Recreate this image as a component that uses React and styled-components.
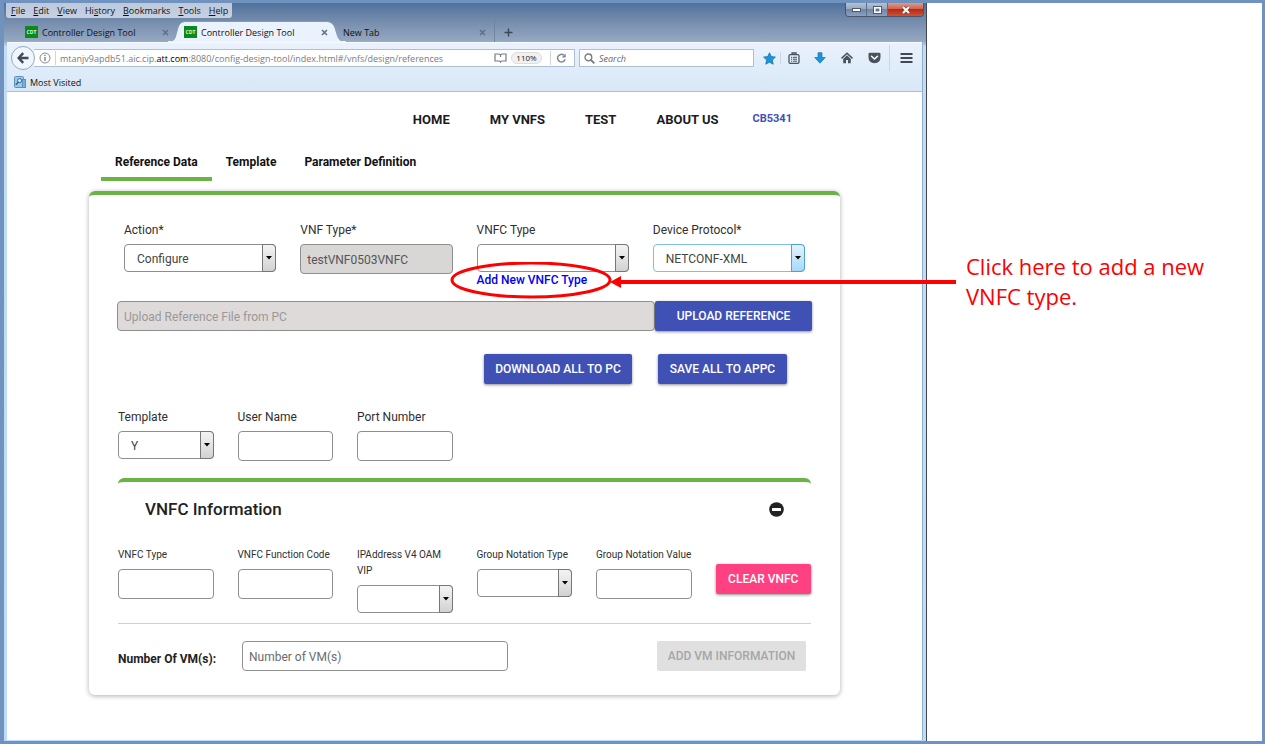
import React from 'react';
import styled, { createGlobalStyle } from 'styled-components';

const GlobalStyle = createGlobalStyle`
  *, *::before, *::after { box-sizing: border-box; }
  body { margin: 0; background: #fff; font-family: Roboto, "Liberation Sans", sans-serif; color: #2b2b2b; }
  button, input, select { font: inherit; margin: 0; }
  a { text-decoration: none; }
`;

const Slide = styled.main`
  display: grid;
  grid-template-columns: minmax(0, 1fr) 335px;
  min-height: 100vh;
  border: 3px solid #7092be;
  border-left-width: 4px;
  background: #fff;
`;

/* ---------- Browser window ---------- */

const BrowserWindow = styled.section`
  display: flex;
  flex-direction: column;
  border-right: 1px solid #40464f;
  background: linear-gradient(#4f719d, #7189aa 16px, #95a8c1 38px, #c3dcf4 44px, #bddcf8);
`;

const ChromeFont = styled.div`
  font-family: "Open Sans", "Noto Sans", sans-serif;
  font-size: 9px;
  color: #111;
`;

const TitleRow = styled(ChromeFont)`
  display: flex;
  justify-content: space-between;
  align-items: flex-start;
  padding: 0 2px;
`;

const MenuBar = styled.nav`
  display: flex;
  gap: 8px;
  height: 15px;
  padding: 0 4px 0 5px;
  border-radius: 0 0 3px 3px;
  background: rgba(235, 240, 248, 0.7);
`;

const MenuItem = styled.button`
  padding: 0;
  border: 0;
  background: none;
  color: #111;
  line-height: 14px;
`;

const WindowButtons = styled.div`
  display: flex;
  height: 14px;
  border: 1px solid #46566d;
  border-top: 0;
  border-radius: 0 0 4px 4px;
  overflow: hidden;
`;

const WindowButton = styled.button`
  display: grid;
  place-items: center;
  width: ${(p) => (p.$close ? 35 : 21)}px;
  padding: 0;
  border: 0;
  border-right: ${(p) => (p.$close ? 0 : 1)}px solid #5d6f88;
  background: ${(p) =>
    p.$close
      ? 'linear-gradient(#dd9a8c, #cf6350 45%, #b92a13 50%, #cf5334)'
      : 'linear-gradient(#b4c1d3, #97a8c0 45%, #6f86a6 50%, #8ba1bf)'};
`;

const TabStrip = styled(ChromeFont)`
  display: flex;
  align-items: stretch;
  height: 24px;
  padding-left: 14px;
`;

const BrowserTab = styled.div`
  position: relative;
  display: flex;
  align-items: center;
  gap: 4px;
  width: 159px;
  padding: 4px 8px 0 7px;
  border-right: ${(p) => (p.$last ? 1 : 0)}px solid #73849b;
`;

const ActiveShape = styled.svg`
  position: absolute;
  left: -10px;
  top: 3px;
`;

const TabTitle = styled.span`
  position: relative;
  flex: 1;
  white-space: nowrap;
`;

const Favicon = styled.span`
  position: relative;
  width: 13px;
  height: 12px;
  background: #0a8a17;
  color: #d9f5d9;
  font-size: 5px;
  font-weight: 700;
  line-height: 12px;
  text-align: center;
`;

const IconButton = styled.button`
  position: relative;
  display: grid;
  place-items: center;
  padding: 0;
  border: 0;
  background: none;
`;

const NewTabButton = styled(IconButton)`
  width: 26px;
  padding-top: 4px;
`;

const WindowBody = styled.div`
  flex: 1;
  display: flex;
  flex-direction: column;
  margin: 0 3px 1px;
  border-right: 1px solid #8fb0d0;
`;

const Toolbar = styled(ChromeFont)`
  display: flex;
  align-items: center;
  height: 31px;
  padding-left: 4px;
  border-top: 1px solid #f6faff;
  background: linear-gradient(#eaf2fd, #deebf9);
`;

const BackButton = styled(IconButton)`
  flex: none;
  width: 24px;
  height: 24px;
  margin-right: -1px;
  border: 1px solid #93a9c4;
  border-radius: 50%;
  background: #f0f6fd;
`;

const BarField = styled.div`
  display: flex;
  align-items: center;
  gap: 4px;
  height: 18px;
  border: 1px solid #aebfd3;
  background: #fff;
`;

const AddressBar = styled(BarField)`
  flex: 1;
  min-width: 0;
  padding: 0 6px 0 5px;
  border-left: 0;
`;

const Address = styled.div`
  flex: 1;
  min-width: 0;
  overflow: hidden;
  white-space: nowrap;
  color: #7b7b7b;
  outline: 0;
  b { font-weight: 400; color: #000; }
`;

const ZoomPill = styled.button`
  height: 12px;
  width: 31px;
  margin-right: 4px;
  padding: 0;
  border: 1px solid #ddd;
  border-radius: 6px;
  background: #f1f1f1;
  font-size: 8px;
  line-height: 10px;
  color: #222;
`;

const Rule = styled.span`
  width: 1px;
  height: ${(p) => p.$h || 14}px;
  background: #ccd5e0;
`;

const SearchBar = styled(BarField)`
  width: 175px;
  margin-left: 4px;
  padding: 0 4px;
`;

const SearchInput = styled.input`
  min-width: 0;
  flex: 1;
  padding: 0;
  border: 0;
  outline: 0;
  background: none;
  font-style: italic;
  &::placeholder { color: #666; opacity: 1; }
`;

const ToolIcons = styled.div`
  display: grid;
  grid-template-columns: 22px 1px 25px 27px 27px 29px 1px 32px;
  align-items: center;
  margin-left: 4px;
`;

const BookmarkBar = styled(ChromeFont)`
  display: flex;
  align-items: center;
  height: 19px;
  padding-left: 7px;
  border-bottom: 1px solid #aabfd6;
  background: linear-gradient(#deebf9, #d9e7f6);
`;

const BookmarkLink = styled.a`
  display: flex;
  align-items: center;
  gap: 4px;
  color: #111;
`;

/* ---------- Web page ---------- */

const Page = styled.div`
  flex: 1;
  padding: 18px 82px 45px;
  background: #fff;
`;

const MainNav = styled.nav`
  display: flex;
  justify-content: flex-end;
  gap: 40px;
  padding-right: 48px;
  line-height: 20px;
`;

const NavLink = styled.a`
  color: #1c1c1c;
  font-size: 13px;
  font-weight: 700;
`;

const UserLink = styled.a`
  margin-left: -6px;
  color: #3f51b5;
  font-size: 11px;
  font-weight: 700;
  line-height: 17px;
`;

const SectionTabs = styled.div`
  display: flex;
  margin-top: 22px;
  padding-left: 12px;
`;

const SectionTab = styled.button`
  padding: 0 14px 5px;
  border: 0;
  border-bottom: 4px solid ${(p) => (p.$active ? '#69b445' : 'transparent')};
  background: none;
  color: #111;
  font-size: 12px;
  font-weight: 700;
  line-height: 20px;
`;

const Card = styled.form`
  margin-top: 10px;
  padding: 27px 29px 24px;
  border-top: 4px solid #69b445;
  border-radius: 6px;
  box-shadow: 0 1px 5px rgba(0, 0, 0, 0.32);
`;

const TopGrid = styled.div`
  display: grid;
  grid-template-columns: repeat(4, minmax(0, 1fr));
  gap: 24px;
  padding: 0 6px;
`;

const SixGrid = styled.div`
  display: grid;
  grid-template-columns: repeat(6, minmax(0, 1fr));
  align-items: start;
  column-gap: 24px;
`;

const Field = styled.div`
  position: relative;
  display: flex;
  flex-direction: column;
`;

const Label = styled.label`
  margin-bottom: 6px;
  color: #2f2f2f;
  font-size: ${(p) => (p.$small ? 10 : 12)}px;
  line-height: 16px;
`;

const TextInput = styled.input`
  width: 100%;
  height: 30px;
  padding: 1px 6px 0;
  border: 1px solid #8e8e8e;
  border-radius: 4px;
  background: #fff;
  color: #555;
  font-size: 12px;
  &::placeholder { color: #6c6c6c; opacity: 1; }
  &:disabled { background: #d9d6d6; }
`;

const UploadInput = styled(TextInput)`
  flex: 1;
  min-width: 0;
  &:disabled { background: #dfdada; }
  &::placeholder { color: #9a9898; }
`;

const SelectWrap = styled.div`
  position: relative;
  display: flex;
`;

const SelectBox = styled.select`
  appearance: none;
  width: 100%;
  height: 28px;
  padding: 2px 16px 0 12px;
  border: 1px solid ${(p) => (p.$focused ? '#7fbcf0' : '#8e8e8e')};
  border-radius: 4px;
  background: #fff;
  color: #444;
  font-size: 12px;
`;

const SelectArrow = styled.span`
  position: absolute;
  top: 0;
  right: 0;
  bottom: 0;
  display: grid;
  place-items: center;
  width: 14px;
  border: 1px solid ${(p) => (p.$focused ? '#4f9fd8' : '#777')};
  border-radius: 0 4px 4px 0;
  background: ${(p) =>
    p.$focused ? 'linear-gradient(#e4f3fd, #a6d9f7)' : 'linear-gradient(#f4f4f4, #d2d2d2)'};
  pointer-events: none;
`;

const AddLink = styled.a`
  color: #0000f5;
  font-size: 12px;
  font-weight: 500;
  line-height: 16px;
`;

const Callout = styled.svg`
  position: absolute;
  left: -28px;
  bottom: -12px;
  z-index: 2;
  pointer-events: none;
`;

const UploadRow = styled.div`
  display: flex;
  margin: 13px -1px 0;
`;

const ButtonRow = styled.div`
  display: flex;
  justify-content: flex-end;
  gap: 26px;
  margin: 23px 24px 25px 0;
`;

const ActionButton = styled.button`
  height: 30px;
  width: ${(p) => (p.$width ? `${p.$width}px` : 'auto')};
  padding: 0;
  border: 0;
  border-radius: 2px;
  background: ${(p) => (p.$pink ? '#ff4081' : '#3f51b5')};
  color: #fff;
  font-size: 12px;
  font-weight: 500;
  white-space: nowrap;
  box-shadow: 0 1px 3px rgba(0, 0, 0, 0.45);
  &:disabled { background: #e0e0e0; color: #a6a6a6; box-shadow: none; }
`;

const ClearButton = styled(ActionButton)`
  margin-top: 17px;
`;

const VnfcSection = styled.section`
  margin-top: 17px;
  padding-top: 16px;
  border-top: 4px solid #69b445;
  border-radius: 6px;
`;

const SectionHead = styled.header`
  display: flex;
  align-items: center;
  justify-content: space-between;
  margin-bottom: 27px;
  padding: 0 27px;
`;

const SectionTitle = styled.h2`
  margin: 0;
  color: #222;
  font-size: 17px;
  font-weight: 500;
  line-height: 22px;
`;

const VmRow = styled.div`
  display: flex;
  align-items: center;
  margin-top: 10px;
  padding: 17px 5px 0 0;
  border-top: 1px solid #cfcfcf;
`;

const VmLabel = styled.label`
  width: 124px;
  padding-top: 6px;
  color: #222;
  font-size: 12px;
  font-weight: 700;
  line-height: 16px;
`;

const VmInputWrap = styled.div`
  width: 266px;
  margin-right: auto;
`;

/* ---------- Note ---------- */

const Note = styled.aside`
  padding: 248px 40px 0 39px;
  color: #fe0000;
  font-family: "Open Sans", "Noto Sans", sans-serif;
  font-size: 22px;
  line-height: 30px;
`;

const menus = [
  ['', 'F', 'ile'],
  ['', 'E', 'dit'],
  ['', 'V', 'iew'],
  ['Hi', 's', 'tory'],
  ['', 'B', 'ookmarks'],
  ['', 'T', 'ools'],
  ['', 'H', 'elp'],
];

function CloseGlyph() {
  return (
    <svg width="7" height="7" viewBox="0 0 7 7" aria-hidden="true">
      <path d="M1 1l5 5M6 1l-5 5" stroke="#5f6e82" strokeWidth="1.5" />
    </svg>
  );
}

function Tab({ title, active, icon, last }) {
  return (
    <BrowserTab $last={last}>
      {active && (
        <ActiveShape width="180" height="21" viewBox="0 0 180 21" aria-hidden="true">
          <path
            d="M0 21C8 21 8 17 10 10C12 3 13 .5 20 .5H158C165 .5 167 3 169 10C171 17 172 21 180 21Z"
            fill="#eaf2fd"
            stroke="#8698b2"
            strokeWidth="1"
          />
          <path d="M1 21H179" stroke="#eaf2fd" strokeWidth="2" />
        </ActiveShape>
      )}
      {icon && <Favicon>CDT</Favicon>}
      <TabTitle>{title}</TabTitle>
      <IconButton type="button" aria-label="Close tab"><CloseGlyph /></IconButton>
    </BrowserTab>
  );
}

function SelectField({ id, label, value, small, focused, children }) {
  return (
    <Field>
      <Label htmlFor={id} $small={small}>{label}</Label>
      <SelectWrap>
        <SelectBox id={id} defaultValue={value} $focused={focused}>
          <option value={value}>{value}</option>
        </SelectBox>
        <SelectArrow $focused={focused}>
          <svg width="6" height="4" viewBox="0 0 6 4" aria-hidden="true"><path d="M0 0H6L3 3.5Z" fill="#000" /></svg>
        </SelectArrow>
      </SelectWrap>
      {children}
    </Field>
  );
}

function InputField({ id, label, small, ...rest }) {
  return (
    <Field>
      <Label htmlFor={id} $small={small}>{label}</Label>
      <TextInput id={id} type="text" {...rest} />
    </Field>
  );
}

function ToolbarIcons() {
  return (
    <ToolIcons>
      <IconButton type="button" aria-label="Bookmark">
        <svg width="13" height="13" viewBox="0 0 13 13"><path d="M6.5 .8L8.3 4.6L12.4 5.1L9.4 8L10.2 12.2L6.5 10.2L2.8 12.2L3.6 8L.6 5.1L4.7 4.6Z" fill="#1c95d8" stroke="#1675ad" strokeWidth=".8" /></svg>
      </IconButton>
      <Rule $h={12} />
      <IconButton type="button" aria-label="Bookmarks list">
        <svg width="12" height="12" viewBox="0 0 12 12" fill="none" stroke="#4a535d">
          <rect x="1" y="2.7" width="10" height="8.6" rx="1.3" strokeWidth="1.3" />
          <path d="M4 2.5V1H8V2.5" strokeWidth="1.3" />
          <path d="M3 5.3H4.2M5 5.3H9M3 7.2H4.2M5 7.2H9M3 9.2H4.2M5 9.2H9" />
        </svg>
      </IconButton>
      <IconButton type="button" aria-label="Downloads">
        <svg width="12" height="12" viewBox="0 0 12 12"><path d="M4 .7H8V5.5H11.3L6 11.2L.7 5.5H4Z" fill="#1c95d8" stroke="#1675ad" strokeWidth=".7" /></svg>
      </IconButton>
      <IconButton type="button" aria-label="Home">
        <svg width="12" height="12" viewBox="0 0 12 12"><path d="M.5 6.4L6 1.2L11.5 6.4" fill="none" stroke="#4a535d" strokeWidth="1.5" /><path d="M2.2 6.9L6 3.3L9.8 6.9V11.2H7V8H5V11.2H2.2Z" fill="#4a535d" /></svg>
      </IconButton>
      <IconButton type="button" aria-label="Pocket">
        <svg width="13" height="12" viewBox="0 0 13 12"><path d="M1.8 .8H11.2Q12.5 .8 12.5 2V5Q12.5 11 6.5 11.2Q.5 11 .5 5V2Q.5 .8 1.8 .8Z" fill="#4a535d" /><path d="M3.5 4.2L6.5 7L9.5 4.2" fill="none" stroke="#fff" strokeWidth="1.5" strokeLinecap="round" /></svg>
      </IconButton>
      <Rule $h={26} />
      <IconButton type="button" aria-label="Open menu">
        <svg width="13" height="12" viewBox="0 0 13 12"><path d="M.5 2H12.5M.5 6H12.5M.5 10H12.5" stroke="#414a54" strokeWidth="2" /></svg>
      </IconButton>
    </ToolIcons>
  );
}

export default function App() {
  return (
    <Slide>
      <GlobalStyle />
      <BrowserWindow>
        <TitleRow>
          <MenuBar aria-label="Browser menu">
            {menus.map(([a, u, b]) => (
              <MenuItem type="button" key={b}>{a}<u>{u}</u>{b}</MenuItem>
            ))}
          </MenuBar>
          <WindowButtons>
            <WindowButton type="button" aria-label="Minimize">
              <svg width="9" height="4" viewBox="0 0 9 4"><rect x=".5" y=".5" width="8" height="3" fill="#fff" stroke="#4d5a6c" /></svg>
            </WindowButton>
            <WindowButton type="button" aria-label="Maximize">
              <svg width="9" height="8" viewBox="0 0 9 8"><rect x=".5" y=".5" width="8" height="7" fill="#fff" stroke="#4d5a6c" /><rect x="3" y="3" width="3" height="2" fill="#8294ad" stroke="#4d5a6c" strokeWidth=".7" /></svg>
            </WindowButton>
            <WindowButton type="button" $close aria-label="Close">
              <svg width="10" height="8" viewBox="0 0 10 8"><path d="M2 1L8 7M8 1L2 7" stroke="#6a4a4a" strokeWidth="3.4" /><path d="M2 1L8 7M8 1L2 7" stroke="#fff" strokeWidth="2" /></svg>
            </WindowButton>
          </WindowButtons>
        </TitleRow>

        <TabStrip>
          <Tab title="Controller Design Tool" icon />
          <Tab title="Controller Design Tool" icon active />
          <Tab title="New Tab" last />
          <NewTabButton type="button" aria-label="New tab">
            <svg width="9" height="9" viewBox="0 0 9 9"><path d="M4.5 .5V8.5M.5 4.5H8.5" stroke="#3c4858" strokeWidth="1.5" /></svg>
          </NewTabButton>
        </TabStrip>

        <WindowBody>
          <Toolbar>
            <BackButton type="button" aria-label="Back">
              <svg width="12" height="12" viewBox="0 0 12 12"><path d="M6.2 1.2L1.6 6L6.2 10.8M2 6H11.5" fill="none" stroke="#404954" strokeWidth="2.4" /></svg>
            </BackButton>
            <AddressBar>
              <svg width="12" height="12" viewBox="0 0 12 12" aria-hidden="true"><circle cx="6" cy="6" r="5" fill="none" stroke="#8a8a8a" /><path d="M6 5V9M6 2.8V4.1" stroke="#777" strokeWidth="1.3" /></svg>
              <Rule />
              <Address role="textbox" aria-label="Address" contentEditable suppressContentEditableWarning spellCheck={false}>
                mtanjv9apdb51.aic.cip.<b>att.com</b>:8080/config-design-tool/index.html#/vnfs/design/references
              </Address>
              <svg width="13" height="10" viewBox="0 0 13 10" fill="none" stroke="#757d87" strokeWidth="1.2" aria-hidden="true"><path d="M6.5 2Q5.8 1 4.5 1H1V8H4.8Q6 8 6.5 9Q7 8 8.2 8H12V1H8.5Q7.2 1 6.5 2ZM6.5 2V4" /></svg>
              <ZoomPill type="button">110%</ZoomPill>
              <Rule />
              <IconButton type="button" aria-label="Reload">
                <svg width="13" height="10" viewBox="0 0 13 10"><path d="M8.8 2.2A3.8 3.8 0 1 0 10.1 6.2" fill="none" stroke="#7d8792" strokeWidth="1.5" /><path d="M10.7 .4V4.5H6.7Z" fill="#7d8792" /></svg>
              </IconButton>
            </AddressBar>
            <SearchBar>
              <svg width="11" height="11" viewBox="0 0 11 11" fill="none" stroke="#7b7b7b" aria-hidden="true"><circle cx="4.4" cy="4.4" r="3.4" strokeWidth="1.3" /><path d="M7 7L10.3 10.3" strokeWidth="1.8" /></svg>
              <SearchInput type="search" aria-label="Search" placeholder="Search" />
            </SearchBar>
            <ToolbarIcons />
          </Toolbar>
          <BookmarkBar>
            <BookmarkLink href="#most-visited">
              <svg width="12" height="12" viewBox="0 0 12 12" aria-hidden="true"><rect x=".5" y=".5" width="9" height="11" rx="1" fill="#9cc8e8" stroke="#5b92bd" /><rect x="8.5" y="3.5" width="3" height="8" fill="#74b2df" stroke="#5b92bd" /><circle cx="5.6" cy="4.6" r="2" fill="#dff0fb" stroke="#2c618d" /><path d="M4.2 6.2L1.8 8.8" stroke="#2c618d" strokeWidth="1.4" /></svg>
              Most Visited
            </BookmarkLink>
          </BookmarkBar>

          <Page>
            <MainNav aria-label="Main">
              <NavLink href="#home">HOME</NavLink>
              <NavLink href="#vnfs">MY VNFS</NavLink>
              <NavLink href="#test">TEST</NavLink>
              <NavLink href="#about">ABOUT US</NavLink>
              <UserLink href="#user">CB5341</UserLink>
            </MainNav>

            <SectionTabs role="tablist">
              <SectionTab type="button" role="tab" aria-selected="true" $active>Reference Data</SectionTab>
              <SectionTab type="button" role="tab" aria-selected="false">Template</SectionTab>
              <SectionTab type="button" role="tab" aria-selected="false">Parameter Definition</SectionTab>
            </SectionTabs>

            <Card onSubmit={(e) => e.preventDefault()}>
              <TopGrid>
                <SelectField id="action" label="Action*" value="Configure" />
                <InputField id="vnf-type" label="VNF Type*" defaultValue="testVNF0503VNFC" disabled />
                <SelectField id="vnfc-type" label="VNFC Type" value="">
                  <AddLink href="#add-vnfc">Add New VNFC Type</AddLink>
                  <Callout width="508" height="38" viewBox="0 0 508 38" aria-hidden="true">
                    <ellipse cx="82" cy="18" rx="79" ry="17" fill="none" stroke="#fe0000" strokeWidth="3" />
                    <path d="M170 20H507" stroke="#fe0000" strokeWidth="4" />
                    <path d="M161 20L172 14V26Z" fill="#fe0000" />
                  </Callout>
                </SelectField>
                <SelectField id="protocol" label="Device Protocol*" value="NETCONF-XML" focused />
              </TopGrid>

              <UploadRow>
                <UploadInput type="text" aria-label="Reference file" placeholder="Upload Reference File from PC" disabled />
                <ActionButton type="button" $width={157}>UPLOAD REFERENCE</ActionButton>
              </UploadRow>

              <ButtonRow>
                <ActionButton type="button" $width={148}>DOWNLOAD ALL TO PC</ActionButton>
                <ActionButton type="button" $width={129}>SAVE ALL TO APPC</ActionButton>
              </ButtonRow>

              <SixGrid>
                <SelectField id="template" label="Template" value="Y" />
                <InputField id="user" label="User Name" />
                <InputField id="port" label="Port Number" />
              </SixGrid>

              <VnfcSection>
                <SectionHead>
                  <SectionTitle>VNFC Information</SectionTitle>
                  <IconButton type="button" aria-label="Collapse">
                    <svg width="15" height="15" viewBox="0 0 15 15"><circle cx="7.5" cy="7.5" r="7.3" fill="#222" /><rect x="3" y="6" width="9" height="3" rx=".5" fill="#fff" /></svg>
                  </IconButton>
                </SectionHead>
                <SixGrid>
                  <InputField small id="v-type" label="VNFC Type" />
                  <InputField small id="v-code" label="VNFC Function Code" />
                  <SelectField small id="v-ip" label="IPAddress V4 OAM VIP" value="" />
                  <SelectField small id="v-gtype" label="Group Notation Type" value="" />
                  <InputField small id="v-gvalue" label="Group Notation Value" />
                  <ClearButton type="button" $pink>CLEAR VNFC</ClearButton>
                </SixGrid>
                <VmRow>
                  <VmLabel htmlFor="vms">Number Of VM(s):</VmLabel>
                  <VmInputWrap><TextInput id="vms" type="text" placeholder="Number of VM(s)" /></VmInputWrap>
                  <ActionButton type="button" $width={149} disabled>ADD VM INFORMATION</ActionButton>
                </VmRow>
              </VnfcSection>
            </Card>
          </Page>
        </WindowBody>
      </BrowserWindow>
      <Note>Click here to add a new VNFC type.</Note>
    </Slide>
  );
}
